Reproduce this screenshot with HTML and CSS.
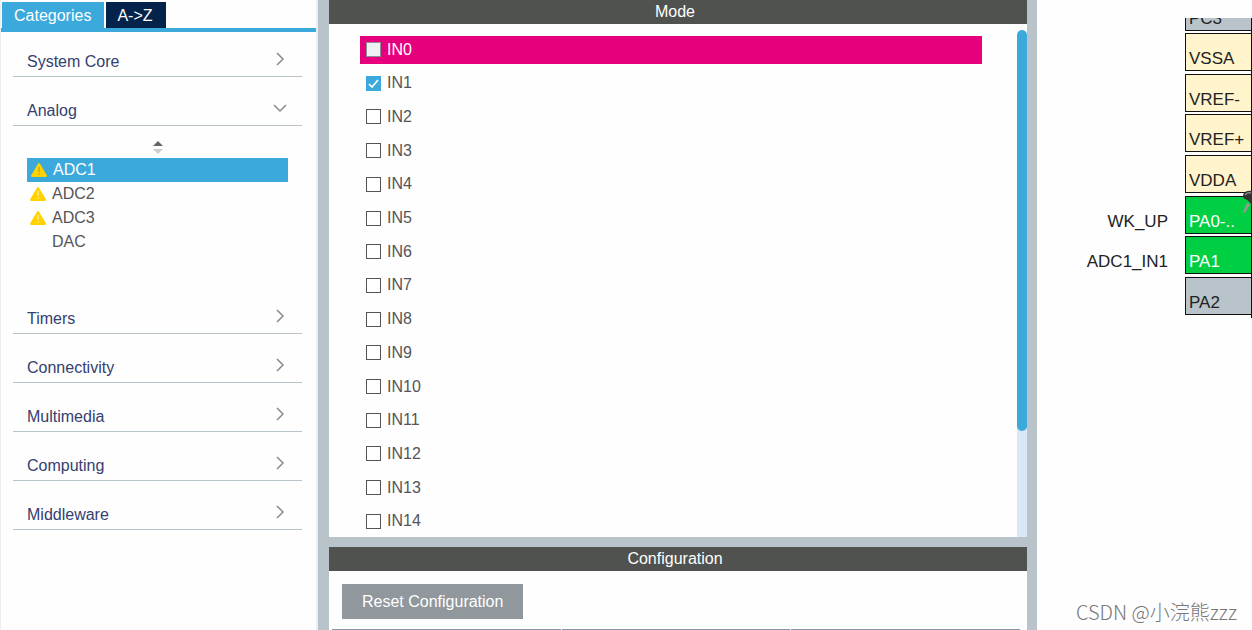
FILE: index.html
```html
<!DOCTYPE html>
<html lang="en">
<head>
<meta charset="utf-8">
<title>Pinout &amp; Configuration</title>
<link rel="stylesheet" href="styles.css">
</head>
<body>
<div class="app">
  <aside class="sidebar">
    <div class="tabs">
      <button class="tab tab-active" type="button">Categories</button>
      <button class="tab" type="button">A-&gt;Z</button>
    </div>
    <nav class="groups">
      <button class="group" type="button">System Core<svg class="chevron" viewBox="0 0 14 14"><path d="M4 1l6 6-6 6"/></svg></button>
      <button class="group" type="button" aria-expanded="true">Analog<svg class="chevron" viewBox="0 0 14 14"><path d="M1 4l6 6 6-6"/></svg></button>
      <div class="peripherals">
        <svg class="sorter" viewBox="0 0 10 13"><path d="M0 5l5-5 5 5z" fill="#666"/><path d="M0 8h10l-5 5z" fill="#ccc"/></svg>
        <ul class="tree">
          <li><button class="node node-selected" type="button"><svg class="warn" viewBox="0 0 16 14"><path d="M7 .7q1-1.200 2 0l6.800 11.600q.4 1.500-1 1.700H1.200Q-.2 13.800.2 12.300z" fill="#ffd200"/><path d="M8 4v5M8 10.500v1.500" stroke="#c6a21c" stroke-width="1.300"/></svg>ADC1</button></li>
          <li><button class="node" type="button"><svg class="warn" viewBox="0 0 16 14"><path d="M7 .7q1-1.200 2 0l6.800 11.600q.4 1.500-1 1.700H1.200Q-.2 13.800.2 12.300z" fill="#ffd200"/><path d="M8 4v5M8 10.500v1.500" stroke="#fff1a0" stroke-width="1.300"/></svg>ADC2</button></li>
          <li><button class="node" type="button"><svg class="warn" viewBox="0 0 16 14"><path d="M7 .7q1-1.200 2 0l6.800 11.600q.4 1.500-1 1.700H1.200Q-.2 13.800.2 12.300z" fill="#ffd200"/><path d="M8 4v5M8 10.500v1.500" stroke="#fff1a0" stroke-width="1.300"/></svg>ADC3</button></li>
          <li><button class="node" type="button"><span class="warn"></span>DAC</button></li>
        </ul>
      </div>
      <button class="group" type="button">Timers<svg class="chevron" viewBox="0 0 14 14"><path d="M4 1l6 6-6 6"/></svg></button>
      <button class="group" type="button">Connectivity<svg class="chevron" viewBox="0 0 14 14"><path d="M4 1l6 6-6 6"/></svg></button>
      <button class="group" type="button">Multimedia<svg class="chevron" viewBox="0 0 14 14"><path d="M4 1l6 6-6 6"/></svg></button>
      <button class="group" type="button">Computing<svg class="chevron" viewBox="0 0 14 14"><path d="M4 1l6 6-6 6"/></svg></button>
      <button class="group" type="button">Middleware<svg class="chevron" viewBox="0 0 14 14"><path d="M4 1l6 6-6 6"/></svg></button>
    </nav>
  </aside>

  <main class="center">
    <section class="mode">
      <h2 class="bar">Mode</h2>
      <div class="mode-body">
        <div class="channels">
          <label class="channel channel-conflict"><input class="check" type="checkbox" disabled>IN0</label>
          <label class="channel"><input class="check" type="checkbox" checked>IN1</label>
          <label class="channel"><input class="check" type="checkbox">IN2</label>
          <label class="channel"><input class="check" type="checkbox">IN3</label>
          <label class="channel"><input class="check" type="checkbox">IN4</label>
          <label class="channel"><input class="check" type="checkbox">IN5</label>
          <label class="channel"><input class="check" type="checkbox">IN6</label>
          <label class="channel"><input class="check" type="checkbox">IN7</label>
          <label class="channel"><input class="check" type="checkbox">IN8</label>
          <label class="channel"><input class="check" type="checkbox">IN9</label>
          <label class="channel"><input class="check" type="checkbox">IN10</label>
          <label class="channel"><input class="check" type="checkbox">IN11</label>
          <label class="channel"><input class="check" type="checkbox">IN12</label>
          <label class="channel"><input class="check" type="checkbox">IN13</label>
          <label class="channel"><input class="check" type="checkbox">IN14</label>
        </div>
        <div class="track"><div class="thumb"></div></div>
      </div>
    </section>
    <section class="config">
      <h2 class="bar">Configuration</h2>
      <div class="config-body">
        <button class="reset" type="button">Reset Configuration</button>
        <div class="config-tabs"><span></span><span></span><span></span></div>
      </div>
    </section>
  </main>

  <section class="pinout">
    <div class="chip">
      <div class="pin pin-cut"><span class="pad pad-free">PC3</span></div>
      <div class="pins">
        <div class="pin"><span class="pad pad-power">VSSA</span></div>
        <div class="pin"><span class="pad pad-power">VREF-</span></div>
        <div class="pin"><span class="pad pad-power">VREF+</span></div>
        <div class="pin"><span class="pad pad-power">VDDA</span></div>
        <div class="pin"><span class="signal">WK_UP</span><span class="pad pad-used">PA0-..</span></div>
        <div class="pin"><span class="signal">ADC1_IN1</span><span class="pad pad-used">PA1</span></div>
        <div class="pin"><span class="pad pad-free">PA2</span></div>
      </div>
      <svg class="pushpin" viewBox="0 0 9 24"><path d="M4 13L0 22l2 1 5-9z" fill="#999"/><path d="M0 5Q2 0 9 1v15Q6 10 2 9 0 8 0 5z" fill="#333"/><path d="M2 5q2-3 6-2" stroke="#888" stroke-width="1.500" fill="none"/></svg>
    </div>
    <p class="credit">CSDN @小浣熊zzz</p>
  </section>
</div>
</body>
</html>
```

FILE: styles.css
```css
* { box-sizing: border-box; }

body {
  margin: 0;
  font: 16px/20px "Liberation Sans", Arial, sans-serif;
  color: #555;
  background: #fefefe;
}

button {
  font: inherit;
  color: inherit;
  border: 0;
  padding: 0;
  background: none;
  text-align: left;
}

.app {
  display: grid;
  grid-template-columns: 318px 1fr 215px;
  height: 100vh;
  overflow: hidden;
}

/* Category browser */
.sidebar { border-left: 1px solid #eceff2; border-right: 2px solid #eceff2; }

.tabs {
  display: flex;
  gap: 2px;
  height: 32px;
  padding: 2px 0 0 1px;
  border-bottom: 4px solid #3ba9dc;
}

.tab { padding: 1px 13px 0 11px; color: #fff; background: #03234b; }
.tab-active { padding: 1px 13px 0 12px; background: #3ba9dc; }

.groups { display: flex; flex-direction: column; padding: 12px 14px 0 12px; }

.group {
  display: flex;
  justify-content: space-between;
  align-items: center;
  height: 33px;
  margin-bottom: 16px;
  padding: 3px 15px 0 14px;
  color: #34406f;
  border-bottom: 1px solid #b8c4ca;
}

.chevron {
  width: 14px;
  height: 14px;
  margin-bottom: 6px;
  fill: none;
  stroke: #8a8a8a;
  stroke-width: 1.5;
}

.peripherals { height: 159px; padding: 0 14px; }
.sorter { display: block; width: 10px; height: 13px; margin: -1px auto 4px; }
.tree { margin: 0; padding: 0; list-style: none; }

.node {
  display: flex;
  align-items: center;
  gap: 6px;
  width: 100%;
  height: 24px;
  padding-left: 3px;
}

.node-selected { padding-left: 4px; color: #fff; background: #3ba9dc; }
.warn { width: 16px; height: 14px; }

/* Mode and configuration */
.center {
  display: flex;
  flex-direction: column;
  gap: 10px;
  padding: 0 10px 0 11px;
  background: #b8c3ca;
}

.mode, .config-body { background: #fefefe; }
.mode { flex: 1; display: flex; flex-direction: column; min-height: 0; }

.bar {
  margin: 0;
  height: 24px;
  padding-right: 6px;
  font: inherit;
  line-height: 24px;
  text-align: center;
  color: #fff;
  background: #50524f;
}

.mode-body { flex: 1; display: flex; justify-content: space-between; min-height: 0; }

.channels {
  flex: 1;
  display: flex;
  flex-direction: column;
  justify-content: space-between;
  padding: 12px 35px 1px 31px;
}

.channel { display: flex; align-items: center; gap: 6px; height: 28px; padding: 0 0 1px 6px; }
.channel-conflict { color: #fff; background: #e6007e; }

.check {
  appearance: none;
  width: 15px;
  height: 15px;
  margin: 0;
  border: 1px solid #555;
  background: #fff;
}

.check:disabled { border: 1px solid #8b8f94; background: #eff0f4; }

.check:checked {
  border-color: #3ba9dc;
  background: #3ba9dc url("data:image/svg+xml,%3Csvg xmlns='http://www.w3.org/2000/svg' viewBox='0 0 13 13'%3E%3Cpath d='M2 7l3 3 6-7' fill='none' stroke='white' stroke-width='1.7'/%3E%3C/svg%3E");
}

.track { width: 10px; margin-top: 6px; background: linear-gradient(#fefefe 50%, #d9e8f6 50%); }
.thumb { height: 79%; border-radius: 5px; background: #3ba9dc; }

.config-body { display: flex; flex-direction: column; gap: 10px; padding: 13px 7px 0 3px; }

.reset {
  align-self: flex-start;
  height: 35px;
  margin-left: 10px;
  padding: 0 20px;
  color: #fff;
  background: #90979d;
}

.config-tabs { display: grid; grid-template-columns: repeat(3, 1fr); gap: 1px; }
.config-tabs span { height: 1px; background: #8796a6; }

/* Chip view */
.pinout {
  display: flex;
  flex-direction: column;
  justify-content: space-between;
  padding-top: 18px;
  font-size: 17px;
  color: #222;
}

.chip { position: relative; height: 300px; border-right: 1px solid #111; }

.pins {
  display: flex;
  flex-direction: column;
  justify-content: space-between;
  height: 282px;
  margin-top: 2px;
}

.pin { display: flex; justify-content: flex-end; align-items: flex-end; height: 38px; }
.pin-cut { height: 13px; overflow: hidden; }
.signal { padding: 0 17px 2px 0; }

.pad {
  display: flex;
  align-items: flex-end;
  width: 66px;
  height: 38px;
  padding: 0 0 1px 3px;
  border: 1px solid #111;
  border-right: 0;
}

.pad-power { background: #fff4cc; }
.pad-free { background: #b8c4ca; }
.pad-used { color: #fff; background: #00cf43; }

.pushpin { position: absolute; right: -1px; top: 172px; width: 9px; height: 24px; }

.credit {
  margin: 0 15px 4px;
  font: 20px/28px "Noto Sans CJK SC", "Noto Sans", sans-serif;
  font-weight: 300;
  text-align: right;
  white-space: nowrap;
  color: #777;
}
```
